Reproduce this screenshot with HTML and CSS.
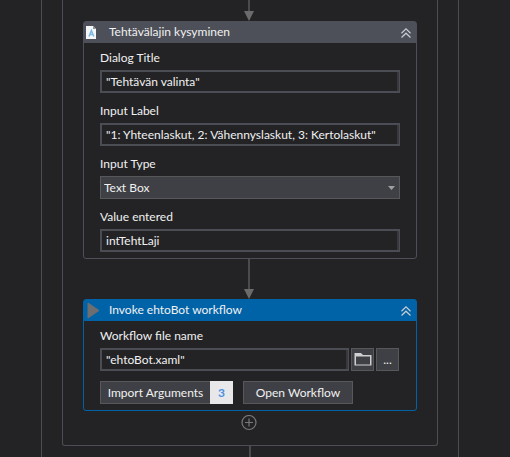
FILE: index.html
```html
<!DOCTYPE html>
<html lang="fi">
<head>
<meta charset="utf-8">
<meta name="viewport" content="width=device-width, initial-scale=1">
<title>Workflow designer</title>
<link rel="stylesheet" href="styles.css">
</head>
<body>
<main class="outer">
  <section class="sequence">
    <div class="arrow"></div>

    <article class="card">
      <header class="card-header">
        <svg class="doc-icon" viewBox="0 0 10 13" aria-hidden="true">
          <path d="M0 0H7L10 3V13H0Z" fill="#f4f6f7"/>
          <path d="M7 0V3H10Z" fill="#8b9199"/>
          <path d="M3 10.5L5.4 4.5L7.8 10.5M3.8 8.6H7" fill="none" stroke="#7db9e0" stroke-width="1.5"/>
        </svg>
        <h2 class="card-title">Tehtävälajin kysyminen</h2>
        <button class="collapse" type="button" aria-label="Collapse">
          <svg viewBox="0 0 10 10" aria-hidden="true"><path d="M0.5 5.2L5 0.9L9.5 5.2M0.5 9.5L5 5.2L9.5 9.5"/></svg>
        </button>
      </header>
      <div class="card-body">
        <label for="dialog-title">Dialog Title</label>
        <input class="field" id="dialog-title" type="text" value="&quot;Tehtävän valinta&quot;">
        <label for="input-label">Input Label</label>
        <input class="field" id="input-label" type="text" value="&quot;1: Yhteenlaskut, 2: Vähennyslaskut, 3: Kertolaskut&quot;">
        <label for="input-type">Input Type</label>
        <div class="select-wrap">
          <select id="input-type"><option>Text Box</option></select>
          <svg class="caret" viewBox="0 0 7 4" aria-hidden="true"><path d="M0 0H7L3.5 4Z" fill="#a0a0a0"/></svg>
        </div>
        <label for="value-entered">Value entered</label>
        <input class="field" id="value-entered" type="text" value="intTehtLaji">
      </div>
    </article>

    <div class="arrow arrow-long"></div>

    <article class="card card-active">
      <header class="card-header">
        <svg class="play-icon" viewBox="0 0 13 17" aria-hidden="true"><path d="M1 1L12 8.5L1 16Z" fill="#6c6e70" stroke="#6c6e70" stroke-linejoin="round"/></svg>
        <h2 class="card-title">Invoke ehtoBot workflow</h2>
        <button class="collapse" type="button" aria-label="Collapse">
          <svg viewBox="0 0 10 10" aria-hidden="true"><path d="M0.5 5.2L5 0.9L9.5 5.2M0.5 9.5L5 5.2L9.5 9.5"/></svg>
        </button>
      </header>
      <div class="card-body">
        <label for="workflow-file">Workflow file name</label>
        <div class="file-row">
          <input class="field" id="workflow-file" type="text" value="&quot;ehtoBot.xaml&quot;">
          <button class="btn btn-square" type="button" aria-label="Browse">
            <svg class="folder" viewBox="0 0 18 13" aria-hidden="true"><path d="M0 0H7L9 2H17.5V12.5H0.5V0" fill="#cfcfd1"/><path d="M2 3.5H16V11.5H2Z" fill="#3f4045"/></svg>
          </button>
          <button class="btn btn-square" type="button">...</button>
        </div>
        <div class="action-row">
          <button class="btn btn-count" type="button"><span class="btn-text">Import Arguments</span><span class="count">3</span></button>
          <button class="btn btn-open" type="button">Open Workflow</button>
        </div>
      </div>
    </article>

    <button class="add" type="button" aria-label="Add activity">
      <svg viewBox="0 0 16 16" aria-hidden="true"><circle cx="8" cy="7.5" r="7"/><path d="M8 3.5V11.5M4 7.5H12"/></svg>
    </button>
  </section>
  <div class="line"></div>
</main>
</body>
</html>
```

FILE: styles.css
```css
* {
  box-sizing: border-box;
}

body {
  margin: 0;
  background: #232325;
  color: #f1f1f1;
  font: 12px/16px Lato, "Open Sans", sans-serif;
}

button,
input,
select {
  margin: 0;
  font: inherit;
  color: inherit;
}

svg {
  display: block;
}

.outer {
  display: flex;
  flex-direction: column;
  min-height: 100vh;
  margin: 0 51px 0 41px;
  padding: 0 20px;
  border: solid #4c4c52;
  border-width: 0 1px;
}

.sequence {
  display: flex;
  flex-direction: column;
  padding: 0 20px 14px;
  border: 1px solid #4c4e55;
  border-top: 0;
  border-radius: 0 0 3px 3px;
}

.arrow {
  display: flex;
  flex-direction: column;
  align-items: center;
  height: 21px;
  margin-right: 2px;
}

.arrow-long {
  height: 40px;
}

.arrow::before {
  content: "";
  flex: 1;
  width: 2px;
  background: #4b4b4d;
}

.arrow::after {
  content: "";
  width: 10px;
  height: 10px;
  background: #6b6b6b;
  clip-path: polygon(0 0, 100% 0, 50% 100%);
}

.line {
  flex: 1;
  align-self: center;
  width: 2px;
  background: #4b4b4d;
}

.card {
  --accent: #4d5058;
  border: 1px solid var(--accent);
  border-radius: 3px;
}

.card-active {
  --accent: #0063a8;
}

.card-header {
  display: grid;
  grid-template-columns: 25px 1fr 10px;
  align-items: center;
  height: 21px;
  padding-right: 5px;
  background: var(--accent);
}

.doc-icon {
  width: 10px;
  height: 13px;
  margin-left: 2px;
}

.play-icon {
  width: 13px;
  height: 17px;
  margin-left: 3px;
}

.card-title {
  margin: 0;
  padding-bottom: 2px;
  font-size: 12px;
  font-weight: 400;
  line-height: 16px;
}

.collapse {
  padding: 0;
  border: 0;
  background: none;
}

.collapse svg {
  width: 10px;
  height: 10px;
  fill: none;
  stroke: #c8ccd2;
  stroke-width: 1.2;
}

.card-body {
  display: flex;
  flex-direction: column;
  padding: 7px 16px 6px;
}

.card-body label {
  margin-bottom: 4px;
}

.field + label,
.select-wrap + label {
  margin-top: 10px;
}

.field {
  width: 100%;
  min-width: 0;
  height: 23px;
  padding: 0 4px;
  border: 2px solid #4b4d55;
  border-right-width: 1px;
  border-radius: 0;
  background: #232325;
  box-shadow: inset -2px 0 #38383d;
  outline: 0;
}

.select-wrap {
  display: grid;
  align-items: center;
}

.select-wrap > * {
  grid-area: 1 / 1;
}

.select-wrap select {
  width: 100%;
  height: 23px;
  padding: 0 3px;
  border: 1px solid #58585a;
  border-radius: 0;
  background: #3f4045;
  appearance: none;
}

.caret {
  justify-self: end;
  width: 7px;
  height: 4px;
  margin-right: 5px;
  pointer-events: none;
}

.file-row {
  display: flex;
  gap: 2px;
  padding-right: 1px;
}

.action-row {
  display: flex;
  gap: 10px;
  margin-top: 10px;
}

.btn {
  display: flex;
  align-items: center;
  justify-content: center;
  flex: none;
  height: 23px;
  padding: 0;
  border: 1px solid #58585a;
  border-radius: 0;
  background: #3f4045;
}

.btn-square {
  width: 23px;
}

.folder {
  width: 18px;
  height: 13px;
}

.btn-count {
  border: 0;
}

.btn-text {
  width: 110px;
  border: 1px solid #58585a;
  border-right: 0;
  line-height: 21px;
}

.count {
  width: 23px;
  background: #e8e8ea;
  color: #4a90e2;
  font-weight: 700;
  line-height: 23px;
}

.btn-open {
  width: 110px;
}

.add {
  align-self: center;
  margin: 4px 2px 0 0;
  padding: 0;
  border: 0;
  background: none;
}

.add svg {
  width: 16px;
  height: 16px;
  fill: none;
  stroke: #78787a;
  stroke-width: 1.2;
}
```
